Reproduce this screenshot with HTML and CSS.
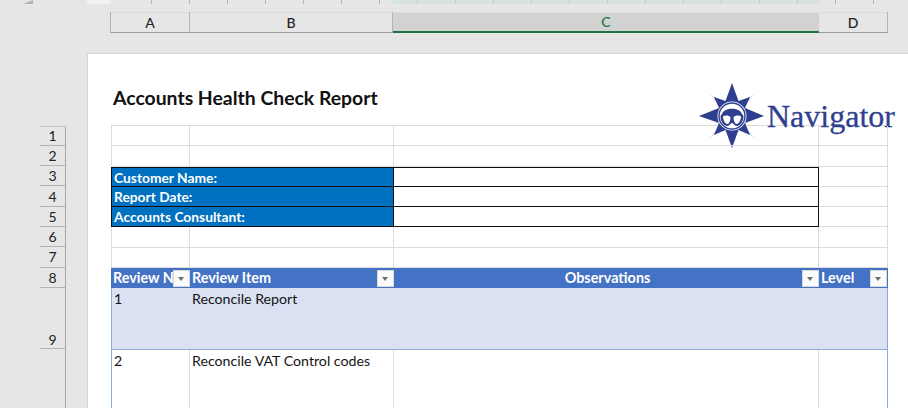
FILE: index.html
```html
<!DOCTYPE html>
<html lang="en">
<head>
<meta charset="utf-8">
<title>Accounts Health Check Report</title>
<link rel="stylesheet" href="styles.css">
</head>
<body>
<div class="app">
  <div class="ruler"><span class="ruler-mark"></span><span class="ruler-corner"></span><span class="ruler-range"></span></div>
  <div class="cols">
    <div class="col col-a">A</div>
    <div class="col col-b">B</div>
    <div class="col col-c">C</div>
    <div class="col col-d">D</div>
  </div>
  <div class="sheet">
    <div class="rowheads">
      <div class="rh">1</div><div class="rh">2</div><div class="rh">3</div><div class="rh">4</div>
      <div class="rh">5</div><div class="rh">6</div><div class="rh">7</div><div class="rh">8</div>
      <div class="rh rh-tall">9</div>
      <div class="rh rh-rest"></div>
    </div>
    <div class="page">
      <h1 class="title">Accounts Health Check Report</h1>
      <div class="logo">
        <svg class="logo-star" width="66" height="66" viewBox="0 0 66 66">
          <path class="star-thin" d="M11 11L27 26L25 28ZM55 11L39 26L41 28ZM11 55L27 40L25 38ZM55 55L39 40L41 38Z"/>
          <path class="star-main" d="M33 0L39.5 18L51 14L46 25L65 33L46 40L51 52L39.5 47L33 65L26.500 47L15 52L20 40L0 33L20 25L15 14L26.500 18Z"/>
          <circle class="star-disc" cx="33" cy="33" r="14.500"/>
          <circle class="star-ring" cx="33" cy="33" r="13"/>
          <path class="star-main" d="M23 31C25 24 41 24 43 31L44.500 33C44.500 39 41 43 37.500 43C35.500 43 34.500 40 33 40C31.500 40 30.500 43 28.500 43C25 43 21.500 39 21.500 33Z"/>
          <path class="star-disc" d="M24 33C27 32 30 32.500 31.500 34C31.500 37.500 30 41 28.500 41C26 41 24 37 24 33ZM42 33C39 32 36 32.500 34.500 34C34.500 37.500 36 41 37.500 41C40 41 42 37 42 33Z"/>
        </svg>
        <span class="logo-text">Navigator</span>
      </div>
      <div class="grid">
        <div class="row"><div class="c a"></div><div class="c b"></div><div class="c d-c"></div><div class="c d"></div></div>
        <div class="row"><div class="c a"></div><div class="c b"></div><div class="c d-c"></div><div class="c d"></div></div>
        <div class="row row-box box-top"><div class="c label">Customer Name:</div><div class="c field"></div><div class="c d"></div></div>
        <div class="row row-box"><div class="c label">Report Date:</div><div class="c field"></div><div class="c d"></div></div>
        <div class="row row-box"><div class="c label">Accounts Consultant:</div><div class="c field"></div><div class="c d"></div></div>
        <div class="row"><div class="c a"></div><div class="c b"></div><div class="c d-c"></div><div class="c d"></div></div>
        <div class="row"><div class="c a"></div><div class="c b"></div><div class="c d-c"></div><div class="c d"></div></div>
        <div class="row row-head">
          <div class="c a">Review No<span class="filter"></span></div>
          <div class="c b">Review Item<span class="filter"></span></div>
          <div class="c d-c center">Observations<span class="filter"></span></div>
          <div class="c d">Level<span class="filter"></span></div>
        </div>
        <div class="row row-item row-band">
          <div class="c a">1</div><div class="c b">Reconcile Report</div><div class="c d-c"></div><div class="c d"></div>
        </div>
        <div class="row row-item row-plain">
          <div class="c a">2</div><div class="c b">Reconcile VAT Control codes</div><div class="c d-c"></div><div class="c d"></div>
        </div>
      </div>
    </div>
  </div>
</div>
</body>
</html>
```
FILE: styles.css
```css
* { box-sizing: border-box; }
html, body { margin: 0; padding: 0; }
body { background: #e6e6e6; font-family: Lato, "Open Sans", sans-serif; color: #141414; }
.app { width: 908px; height: 408px; overflow: hidden; display: flex; flex-direction: column; background: #e6e6e6; }

.ruler {
  height: 4px; display: flex; flex: none;
  background: repeating-linear-gradient(90deg, #b5b5b5 0 1px, transparent 1px 38px) 151px 0 no-repeat;
}
.ruler-mark { width: 0; height: 0; margin-left: 23px; border-style: solid; border-width: 0 0 4px 10px; border-color: transparent transparent #b4b4b4 transparent; }
.ruler-corner { width: 24px; margin-left: 54px; background: #f1f1f1; }
.ruler-range { width: 426px; margin-left: 282px; background: rgba(200, 226, 210, 0.55); }

.cols { display: flex; flex: none; height: 21px; margin: 8px 0 0 110px; font-size: 14px; font-weight: 500; }
.col { display: flex; align-items: center; justify-content: center; height: 21px; border-right: 1px solid #b4b4b4; border-bottom: 1px solid #9c9c9c; background: #e6e6e6; color: #222; box-shadow: inset 0 1px 0 #dcdcdc; }
.col-a { width: 80px; border-left: 1px solid #b4b4b4; }
.col-b { width: 203px; }
.col-c { width: 426px; background: #d2d2d2; color: #217346; border-bottom: 2px solid #217346; border-right: 0; }
.col-d { width: 69px; }

.sheet { flex: 1; display: flex; margin-top: 20px; min-height: 0; }
.rowheads { width: 87px; flex: none; padding: 72.5px 0 0 40px; display: flex; flex-direction: column; }
.rh { height: 20.3px; flex: none; width: 26px; display: flex; align-items: center; justify-content: center; font-size: 14px; color: #222; border-right: 1px solid #a8a8a8; border-bottom: 1px solid #b4b4b4; }
.rh:first-child { border-top: 1px solid #c8c8c8; }
.rh-tall { height: 61px; align-items: flex-end; }
.rh-rest { height: 80px; border-bottom: 0; }

.page { position: relative; flex: 1; background: #fff; border-top: 1px solid #d4d4d4; border-left: 1px solid #d4d4d4; padding: 0 0 0 23px; min-width: 0; }
.title { margin: 32px 0 0 2px; height: 39px; font-size: 19.4px; line-height: 24px; font-weight: 700; color: #111; white-space: nowrap; }

.logo { position: absolute; left: 611px; top: 29px; display: flex; align-items: center; }
.logo-star { flex: none; }
.star-main { fill: #2f3f8f; }
.star-thin { fill: #aeb4d4; }
.star-disc { fill: #fff; }
.star-ring { fill: none; stroke: #2f3f8f; stroke-width: 1.4; }
.logo-text { margin-left: 2px; font-family: "Liberation Serif", serif; font-size: 32px; line-height: 34px; color: #2f3f8f; -webkit-text-stroke: 0.3px #2f3f8f; }

.grid { display: flex; flex-direction: column; width: 777px; border-top: 1px solid #dcdcdc; font-size: 14.2px; }
.row { display: grid; grid-template-columns: 79px 204px 425px 69px; height: 20.3px; flex: none; }
.c { border-right: 1px solid #dcdcdc; border-bottom: 1px solid #dcdcdc; padding: 0 2px; line-height: 19px; white-space: nowrap; overflow: hidden; position: relative; }
.a { border-left: 1px solid #dcdcdc; }

.row-box { grid-template-columns: 283px 425px 69px; }
.label { background: #0070c0; color: #fff; font-weight: 700; font-size: 13.8px; border: 1px solid #111; border-top: 0; }
.field { background: #fff; border-right: 1px solid #111; border-bottom: 1px solid #111; }
.box-top .label, .box-top .field { border-top: 1px solid #111; }

.row-head { background: #4472c4; color: #fff; font-weight: 700; font-size: 14.4px; }
.row-head .c { border: 0; padding-right: 0; }
.center { text-align: center; }
.filter { position: absolute; right: 0; top: 2px; width: 17px; height: 17px; background: #fbfbfb; border: 1px solid #d8d8d8; }
.filter::after { content: ""; position: absolute; left: 4px; top: 6px; border-style: solid; border-width: 4px 3.5px 0; border-color: #6e6e6e transparent transparent; }
.row-head .d .filter { right: 1px; }

.row-item { height: 61.5px; }
.row-item .c { padding-top: 1px; }
.row-band { background: #d9e1f2; }
.row-band .c { border-right: 0; border-bottom: 1px solid #8ea9db; }
.row-band .a { border-left: 1px solid #8ea9db; }
.row-band .d, .row-plain .d { border-right: 1px solid #8ea9db; }
.row-plain { height: 70px; }
.row-plain .c { border-bottom: 0; }
.row-plain .a { border-left: 1px solid #8ea9db; }
```
